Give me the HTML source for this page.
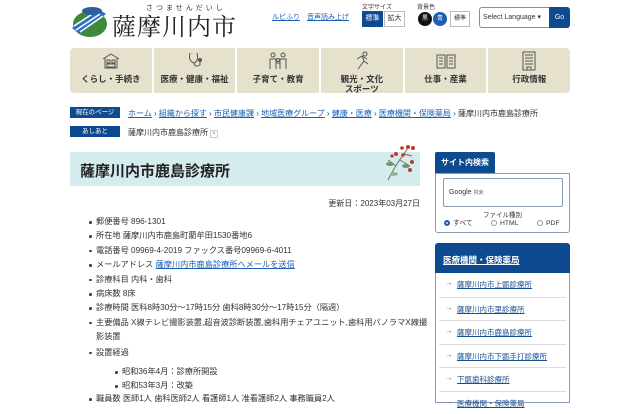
<!DOCTYPE html>
<html><head><meta charset="utf-8"><style>
*{margin:0;padding:0;box-sizing:border-box}
body{width:640px;height:400px;overflow:hidden;background:#fff;font-family:"Liberation Sans","Noto Sans CJK JP",sans-serif;color:#333;position:relative}
.a{position:absolute}
.blue{background:#0d4a8f;color:#fff}
.nav{left:70px;top:48px;width:500px;height:45px;background:#e6e1cc;border-radius:4px;display:flex}
.nav div{flex:1;border-right:2px solid #fff;position:relative;text-align:center;font-size:8.5px;font-weight:bold;color:#333}
.nav div:last-child{border-right:none}
.nav span{position:absolute;left:0;right:0;top:26px;line-height:10px}
.nav svg{position:absolute;left:50%;top:3px;margin-left:-10px}
.bc{font-size:8px;color:#0d4a8f}
.bc u{color:#1a5fb4}
li{list-style:none;position:relative;font-size:8.2px;line-height:14.4px;white-space:nowrap}
li:before{content:"";position:absolute;left:-7px;top:6px;width:2.5px;height:2.5px;background:#444;border-radius:50%}
.side a{display:block;height:23.5px;border-top:1px solid #ddd;font-size:7.5px;color:#1a4f8f;text-decoration:underline;padding:6px 0 0 18px;position:relative}
.side a:before{content:"→";position:absolute;left:6px;top:5px;text-decoration:none;color:#555}
.r{position:absolute;top:220px;font-size:6.8px;white-space:nowrap;line-height:8px}
.r i{display:inline-block;width:6px;height:6px;border-radius:50%;border:1px solid #999;vertical-align:-1px;margin-right:3px}
</style></head><body>
<svg class="a" style="left:70px;top:4px" width="38" height="34" viewBox="0 0 38 34">
<ellipse cx="20" cy="20" rx="17" ry="13" fill="#3f8a3a"/>
<path d="M2 24 L30 6 L36 10 L10 30Z" fill="#2a6fc4"/>
<path d="M6 26 L30 10 M10 28 L33 12 M4 22 L27 7" stroke="#fff" stroke-width="1.5"/>
<ellipse cx="22" cy="7" rx="10" ry="4" fill="#2e5e9e"/>
</svg>
<div class="a" style="left:146px;top:3px;font-size:7px;letter-spacing:3px;color:#333">さつませんだいし</div>
<div class="a" style="left:112px;top:11px;font-size:24px;font-family:'Noto Serif CJK SC',serif;color:#222;letter-spacing:1px;line-height:28px">薩摩川内市</div>
<div class="a" style="left:272px;top:12px;font-size:7px;color:#1a5fb4;text-decoration:underline">ルビふり</div>
<div class="a" style="left:307px;top:12px;font-size:7px;color:#1a5fb4;text-decoration:underline">音声読み上げ</div>
<div class="a" style="left:362px;top:2px;font-size:6px">文字サイズ</div>
<div class="a blue" style="left:362px;top:11px;width:21px;height:16px;font-size:7px;text-align:center;line-height:16px">標準</div>
<div class="a" style="left:384px;top:11px;width:21px;height:16px;font-size:7px;text-align:center;line-height:14px;border:1px solid #bbb">拡大</div>
<div class="a" style="left:417px;top:2px;font-size:6px">背景色</div>
<div class="a" style="left:418px;top:12px;width:14px;height:14px;border-radius:50%;background:#111;color:#fff;font-size:6px;text-align:center;line-height:14px">黒</div>
<div class="a" style="left:433px;top:12px;width:14px;height:14px;border-radius:50%;background:#1d5fb0;color:#fff;font-size:6px;text-align:center;line-height:14px">青</div>
<div class="a" style="left:450px;top:11px;width:20px;height:16px;font-size:6px;text-align:center;line-height:14px;border:1px solid #bbb">標準</div>
<div class="a" style="left:479px;top:7px;width:71px;height:21px;border:1px solid #7a8fb0;border-radius:3px 0 0 3px;font-size:7px;line-height:19px;padding-left:3px">Select Language ▾</div>
<div class="a blue" style="left:549px;top:7px;width:21px;height:21px;font-size:7px;text-align:center;line-height:21px;border-radius:0 3px 3px 0">Go</div>
<div class="a nav">
<div><svg width="20" height="20" viewBox="0 0 20 20" fill="none" stroke="#555" stroke-width="1"><path d="M2 8 L10 3 L18 8 M4 7 V17 H16 V7"/><rect x="6" y="9" width="3" height="3"/><rect x="11" y="9" width="3" height="3"/><rect x="6" y="13" width="8" height="3"/></svg><span>くらし・手続き</span></div>
<div><svg width="20" height="20" viewBox="0 0 20 20" fill="none" stroke="#555" stroke-width="1"><path d="M5 2 Q3 10 9 12 Q14 10 12 2 M9 12 Q10 17 15 14 V10"/><circle cx="15" cy="9" r="1.5" fill="#555"/></svg><span>医療・健康・福祉</span></div>
<div><svg width="20" height="20" viewBox="0 0 20 20" fill="none" stroke="#555" stroke-width="1"><circle cx="5" cy="4" r="2"/><circle cx="15" cy="4" r="2"/><circle cx="10" cy="9" r="1.5"/><path d="M2 18 V8 H8 V18 M12 18 V8 H18 V18 M8 18 V12 H12 V18"/></svg><span>子育て・教育</span></div>
<div><svg width="20" height="20" viewBox="0 0 20 20" fill="none" stroke="#555" stroke-width="1"><circle cx="13" cy="3" r="2"/><path d="M5 8 L10 5 L12 10 L9 14 L6 18 M12 10 L16 13 M10 5 L15 8"/></svg><span>観光・文化<br>スポーツ</span></div>
<div><svg width="20" height="20" viewBox="0 0 20 20" fill="none" stroke="#555" stroke-width="1"><path d="M1 4 H9 V17 H1Z M11 4 H19 V17 H11Z M3 7 H7 M3 10 H7 M3 13 H7 M13 7 H17 M13 10 H17 M13 13 H17"/></svg><span>仕事・産業</span></div>
<div><svg width="20" height="20" viewBox="0 0 20 20" fill="none" stroke="#555" stroke-width="1"><rect x="4" y="1" width="12" height="18"/><path d="M6 4 H14 M6 7 H14 M6 10 H14 M6 13 H14 M8 19 V16 H12 V19"/></svg><span>行政情報</span></div>
</div>
<div class="a blue" style="left:70px;top:107px;width:50px;height:11px;font-size:6.5px;text-align:center;line-height:11px">現在のページ</div>
<div class="a bc" style="left:128px;top:108px;white-space:nowrap"><u>ホーム</u> › <u>組織から探す</u> › <u>市民健康課</u> › <u>地域医療グループ</u> › <u>健康・医療</u> › <u>医療機関・保険薬局</u> › <span style="color:#333">薩摩川内市鹿島診療所</span></div>
<div class="a blue" style="left:70px;top:126px;width:50px;height:11px;font-size:6.5px;text-align:center;line-height:11px">あしあと</div>
<div class="a" style="left:128px;top:127px;font-size:8px">薩摩川内市鹿島診療所 <span style="font-size:6px;color:#888;border:1px solid #ccc;padding:0 1px">×</span></div>
<div class="a" style="left:70px;top:152px;width:350px;height:34px;background:#d5ecef"></div>
<div class="a" style="left:80px;top:160px;font-size:15px;font-weight:bold;color:#222">薩摩川内市鹿島診療所</div>
<svg class="a" style="left:382px;top:142px" width="34" height="40" viewBox="0 0 34 40">
<path d="M6 38 Q14 22 26 6 M14 24 L6 18 M18 18 L28 24 M22 12 L30 14" stroke="#7a6a50" stroke-width="1" fill="none"/>
<ellipse cx="8" cy="22" rx="4" ry="2" fill="#6a9a6a"/><ellipse cx="24" cy="24" rx="4" ry="2" fill="#6a9a6a"/><ellipse cx="12" cy="32" rx="4" ry="1.8" fill="#8ab08a"/>
<g fill="#c0392b"><circle cx="26" cy="5" r="2"/><circle cx="31" cy="6" r="2"/><circle cx="20" cy="6" r="1.8"/><circle cx="14" cy="12" r="2"/><circle cx="21" cy="13" r="1.8"/><circle cx="30" cy="20" r="2"/><circle cx="28" cy="28" r="2"/><circle cx="10" cy="14" r="1.6"/></g>
</svg>
<div class="a" style="left:300px;top:198px;width:120px;text-align:right;font-size:8px">更新日：2023年03月27日</div>
<ul class="a" style="left:96px;top:215px;width:340px">
<li>郵便番号 896-1301</li>
<li>所在地 薩摩川内市鹿島町藺牟田1530番地6</li>
<li>電話番号 09969-4-2019 ファックス番号09969-6-4011</li>
<li>メールアドレス <u style="color:#1a5fb4">薩摩川内市鹿島診療所へメールを送信</u></li>
<li>診療科目 内科・歯科</li>
<li>病床数 8床</li>
<li>診療時間 医科8時30分～17時15分 歯科8時30分～17時15分（隔週）</li>
<li>主要備品 X線テレビ撮影装置,超音波診断装置,歯科用チェアユニット,歯科用パノラマX線撮<br>影装置</li>
<li style="margin-top:1px">設置経過</li>
</ul>
<ul class="a" style="left:122px;top:365px;width:300px">
<li>昭和36年4月：診療所開設</li>
<li>昭和53年3月：改築</li>
</ul>
<ul class="a" style="left:96px;top:392px;width:330px"><li>職員数 医師1人 歯科医師2人 看護師1人 准看護師2人 事務職員2人</li></ul>
<div class="a blue" style="left:435px;top:152px;width:60px;height:21px;font-size:8px;font-weight:bold;line-height:21px;text-align:center;border-radius:2px 2px 0 0">サイト内検索</div>
<div class="a" style="left:435px;top:173px;width:135px;height:60px;border:1px solid #8a9ab5;border-radius:0 0 3px 3px"></div>
<div class="a" style="left:443px;top:178px;width:120px;height:29px;border:1px solid #8a9ab5;border-radius:2px;font-size:7px;padding:10px 0 0 5px">Google <span style="font-size:5px;color:#777">検索</span></div>
<div class="a" style="left:435px;top:209px;width:135px;text-align:center;font-size:6.5px">ファイル種別</div>
<div class="r" style="left:444px"><i style="border:2px solid #1d5fb0;background:#1d5fb0;box-shadow:inset 0 0 0 1px #fff"></i>すべて</div>
<div class="r" style="left:491px"><i></i>HTML</div>
<div class="r" style="left:537px"><i></i>PDF</div>
<div class="a blue" style="left:435px;top:243px;width:135px;height:30px;border-radius:3px 3px 0 0;font-size:8.5px;font-weight:bold;padding:11px 0 0 8px"><u>医療機関・保険薬局</u></div>
<div class="a side" style="left:435px;top:273px;width:135px;height:130px;border:1px solid #8a9ab5;border-top:none;padding:0 3px">
<a style="border-top:none">薩摩川内市上甑診療所</a>
<a>薩摩川内市里診療所</a>
<a>薩摩川内市鹿島診療所</a>
<a>薩摩川内市下甑手打診療所</a>
<a>下甑歯科診療所</a>
<a>医療機関・保険薬局</a>
</div>
</body></html>
